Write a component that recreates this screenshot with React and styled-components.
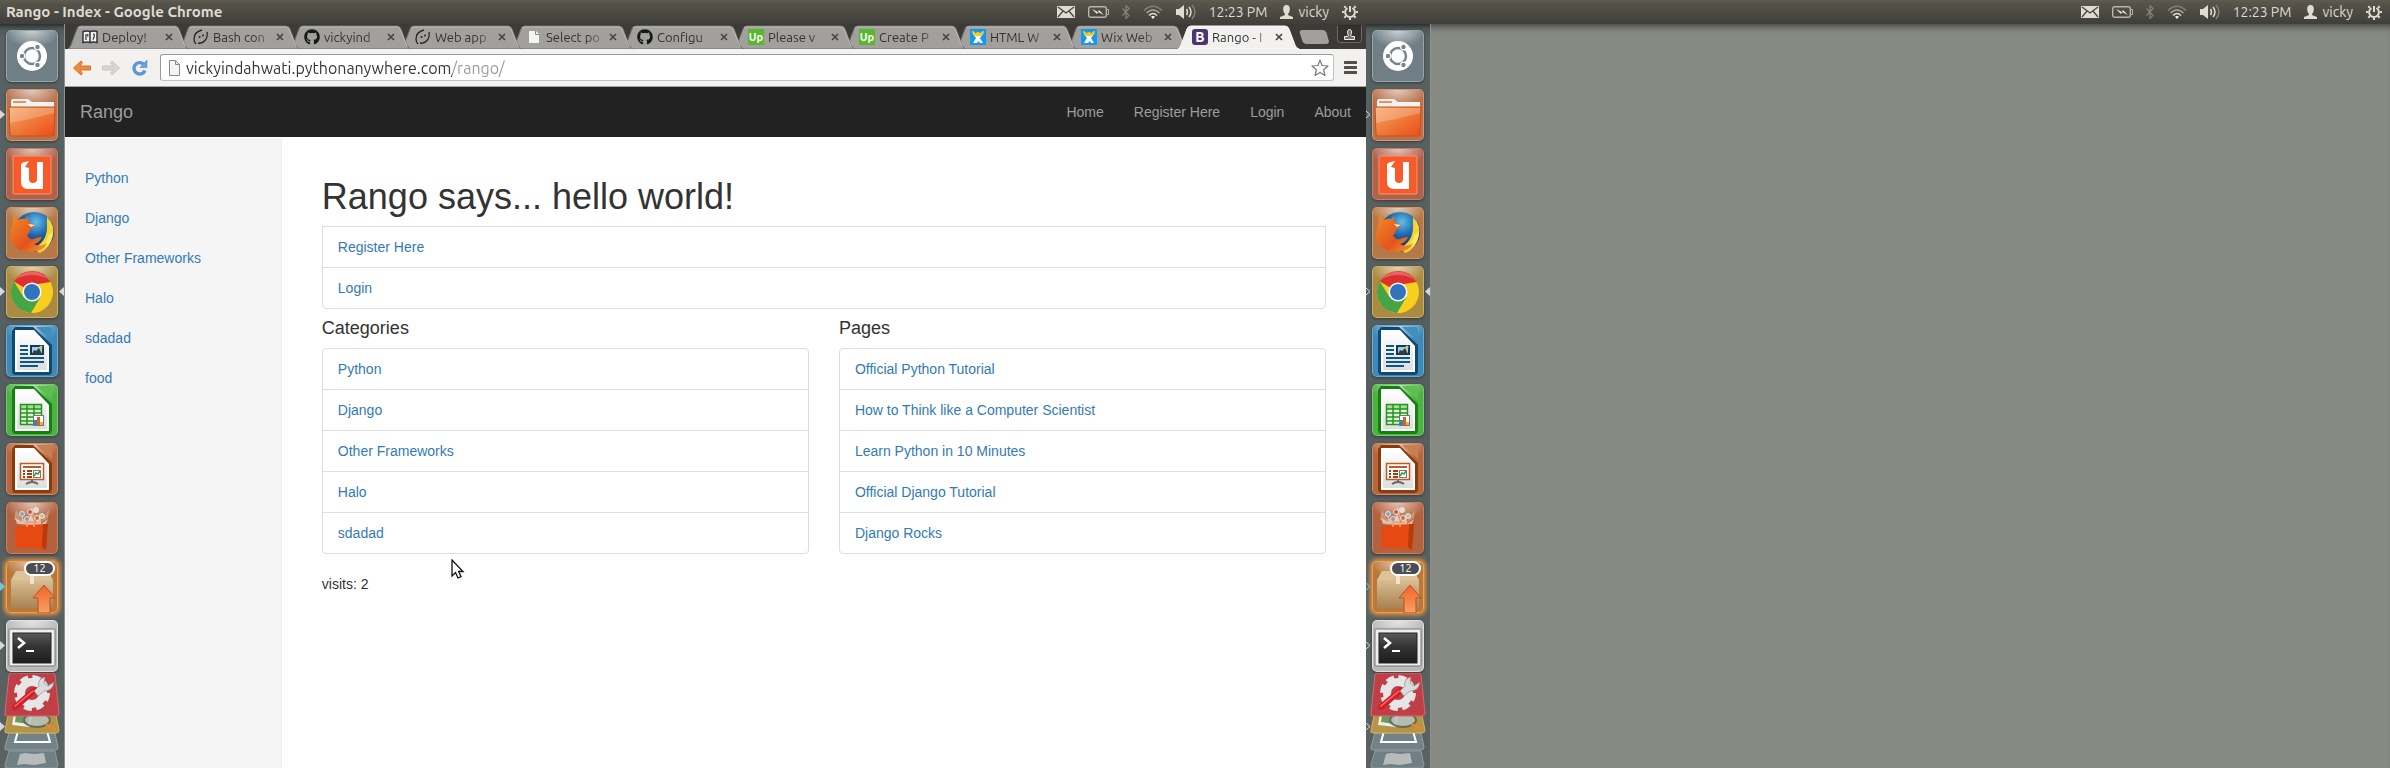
import React from 'react';
import styled, { createGlobalStyle, css } from 'styled-components';
import { FaGithub } from 'react-icons/fa';

const GlobalStyle = createGlobalStyle`
  * { box-sizing: border-box; }
  body { margin: 0; background: #878983; }
  ul, h1, h2, p { margin: 0; padding: 0; list-style: none; font-weight: 400; }
  button { border: 0; padding: 0; background: none; font: inherit; color: inherit; display: block; }
  a { text-decoration: none; }
  svg { display: block; flex: none; }
`;

const uiFont = 'Ubuntu, "Noto Sans", sans-serif';
const pageFont = '"Helvetica Neue", Helvetica, "Liberation Sans", Arial, sans-serif';

/* ---------- desktop shell ---------- */

const Desktop = styled.div`
  display: grid;
  grid-template-columns: 1366fr 1024fr;
  min-height: 100vh;
  font-family: ${uiFont};
`;

const Screen = styled.section`
  display: flex;
  flex-direction: column;
  min-width: 0;
`;

const Workspace = styled.div`
  display: flex;
  flex: 1;
  min-height: 0;
  box-shadow: ${(p) => (p.$shaded ? 'inset 0 7px 6px -4px #4a4b47' : 'none')};
`;

const Panel = styled.header`
  display: flex;
  align-items: center;
  justify-content: space-between;
  height: 24px;
  padding: 0 8px 0 6px;
  background: linear-gradient(#5f5c4e 0, #55534a 4px, #3f3e39 100%);
  color: #dfdbd2;
  font-size: 14px;
`;

const WindowTitle = styled.strong`
  font-size: 15px;
  line-height: 24px;
  white-space: nowrap;
`;

const Indicators = styled.div`
  display: flex;
  align-items: center;
  gap: 13px;
  margin-left: auto;
  line-height: 24px;
  white-space: nowrap;
`;

const UserMenu = styled.button`
  display: flex;
  align-items: center;
  gap: 5px;
`;

/* ---------- launcher ---------- */

const LauncherBar = styled.nav`
  width: 65px;
  flex: none;
  padding: 6px 0 0 6px;
  border-right: 1px solid #8d9290;
  background: linear-gradient(#2c3030 0, #4e5757 5px, #596262 12px, #555f5f 50%, #596261 100%);
`;

const LauncherList = styled.ul`
  display: flex;
  flex-direction: column;
  gap: 7px;
`;

const LauncherItem = styled.li`
  position: relative;
  width: 52px;
`;

const Tile = styled.button`
  width: 52px;
  height: 52px;
  border-radius: 5px;
  overflow: hidden;
  background: radial-gradient(ellipse 28px 18px at 50% 0, rgba(255, 255, 255, 0.65), rgba(255, 255, 255, 0) 100%), ${(p) => p.$color};
  box-shadow: inset 0 0 0 1px ${(p) => p.$edge}, 0 1px 3px rgba(0, 0, 0, 0.4);
  ${(p) => p.$glow && css`
    box-shadow: inset 0 0 0 1px #f0a050, 0 0 4px 2px #e8923c;
  `}
`;

const Badge = styled.span`
  position: absolute;
  top: 0;
  right: 3px;
  width: 31px;
  height: 15px;
  border: 2px solid #fff;
  border-radius: 8px;
  background: #4c4d50;
  color: #fff;
  font-size: 11px;
  line-height: 11px;
  text-align: center;
`;

const Pip = styled.svg`
  position: absolute;
  top: 21px;
  ${(p) => (p.$side === 'right' ? 'right: -6px;' : 'left: -6px;')}
`;

const Stack = styled.div`
  position: relative;
  width: 58px;
  margin: 1px 0 0 -3px;
`;

const StackPip = styled(Pip)`
  top: 49px;
  left: -3px;
`;

function PipShape({ side = 'left', tone = '#d8d8d8', outline, as: Base = Pip }) {
  return (
    <Base $side={side} width="5" height="9" viewBox="0 0 5 9">
      <path
        d={side === 'right' ? 'M5 0 0 4.500 5 9Z' : outline ? 'M0 1 4 4.500 0 8' : 'M0 0 5 4.500 0 9Z'}
        fill={outline && side !== 'right' ? 'none' : tone}
        stroke={outline && side !== 'right' ? tone : 'none'}
      />
    </Base>
  );
}

const Icon52 = ({ children }) => (
  <svg width="52" height="52" viewBox="0 0 52 52" aria-hidden="true">{children}</svg>
);

const DefsHolder = styled.svg`
  position: absolute;
`;

function SharedGradients() {
  return (
    <DefsHolder width="0" height="0" aria-hidden="true">
      <defs>
        <linearGradient id="folder" x1="0" y1="0" x2="1" y2="1">
          <stop offset="0" stopColor="#f6a765" /><stop offset="0.500" stopColor="#ee7a3a" /><stop offset="1" stopColor="#ee4a1a" />
        </linearGradient>
        <linearGradient id="paper" x1="0" y1="0" x2="0" y2="1">
          <stop offset="0" stopColor="#fff" /><stop offset="1" stopColor="#dedede" />
        </linearGradient>
        <radialGradient id="globe" cx="0.550" cy="0.250" r="0.700">
          <stop offset="0" stopColor="#5fc0ea" /><stop offset="0.500" stopColor="#1c62a8" /><stop offset="1" stopColor="#0c2a66" />
        </radialGradient>
        <linearGradient id="fox" x1="0" y1="0" x2="1" y2="1">
          <stop offset="0" stopColor="#f28a28" /><stop offset="0.600" stopColor="#e4541c" /><stop offset="1" stopColor="#f0a02c" />
        </linearGradient>
        <linearGradient id="box" x1="0" y1="0" x2="0" y2="1">
          <stop offset="0" stopColor="#d9bd90" /><stop offset="1" stopColor="#a98354" />
        </linearGradient>
        <linearGradient id="arrow" x1="0" y1="0" x2="0" y2="1">
          <stop offset="0" stopColor="#f0642a" /><stop offset="1" stopColor="#f8a060" />
        </linearGradient>
        <linearGradient id="screen" x1="0" y1="0" x2="0" y2="1">
          <stop offset="0" stopColor="#5a5a5a" /><stop offset="0.450" stopColor="#333" /><stop offset="1" stopColor="#1e1e1e" />
        </linearGradient>
      </defs>
    </DefsHolder>
  );
}

const UbuntuIcon = () => (
  <Icon52>
    <circle cx="26" cy="26" r="15" fill="#fff" />
    <circle cx="26" cy="26" r="8" fill="none" stroke="#77868c" strokeWidth="2.500" />
    {[[16, 26], [31.500, 17], [31.500, 35]].map(([x, y]) => (
      <circle key={`${x}-${y}`} cx={x} cy={y} r="2.800" fill="#77868c" stroke="#fff" strokeWidth="1.200" />
    ))}
  </Icon52>
);

const FilesIcon = () => (
  <Icon52>
    <path d="M5 13q0-3 2-3h15l4 3h22v7H5Z" fill="#f3f3f3" />
    <path d="M7 12h13v2H7Z" fill="#ee9158" />
    <path d="M3 18h46l-1 28q0 1-2 1H6q-2 0-2-2Z" fill="url(#folder)" stroke="#c8501c" />
    <path d="M4 19h44v5Q26 30 4 34Z" fill="#fff" opacity="0.220" />
  </Icon52>
);

const UbuntuOneIcon = () => (
  <Icon52>
    <rect x="7" y="8" width="38" height="38" rx="1" fill="#f85b29" stroke="#fb9272" />
    <path d="M15 16q2-2 4-2l4-1v18q0 4 4 4t4-4V14h6v27H22q-7 0-7-7Z" fill="#fff" />
    <path d="m19 19 4-6v7Z" fill="#f85b29" />
  </Icon52>
);

const FirefoxIcon = () => (
  <Icon52>
    <circle cx="28" cy="25" r="20" fill="url(#globe)" />
    <path d="M41 10q8 8 6 18-2 12-13 18l-8-4q14-6 15-20Z" fill="#f8d22c" />
    <path d="M44 12q2 10-2 17l5-5q0 12-9 18l-6 2q10-10 12-20Z" fill="#fbee6a" opacity="0.800" />
    <path d="M8 8q1 3 4 5 4-2 7-1l3-3q-1 4 1 6l6 3q-1 3-5 4 0 4-3 6 2 5 7 4 4-2 8-2-3 6-8 7 6 4 13-1-3 8-14 9Q11 46 5 34q-2-8 1-15Q6 13 8 8Z" fill="url(#fox)" />
    <path d="m22 17 7 1-4 2Z" fill="#fff3df" />
  </Icon52>
);

const ChromeIcon = () => (
  <Icon52>
    <circle cx="26" cy="26" r="21" fill="#f8cf1c" />
    <path d="M26 26 7.800 15.500A21 21 0 0 1 44.500 16H26Z" fill="#de3030" />
    <path d="M26 26V16h18.500L26 19Z" fill="#de3030" />
    <path d="M7.800 15.500A21 21 0 0 0 25 47l9.500-16H17.500Z" fill="#46a446" />
    <path d="M10 13a21 21 0 0 1 32 0q-16-8-32 0Z" fill="#fff" opacity="0.250" />
    <circle cx="26" cy="26" r="9.500" fill="#fff" />
    <circle cx="26" cy="26" r="8" fill="#2f74bd" />
  </Icon52>
);

const Document = ({ dark, fold, children }) => (
  <Icon52>
    <path d="M9 2h18l19 18v26q0 4-4 4H10q-4 0-4-4V6Z" fill={dark} />
    <path d="M30 2h12q4 0 4 4v10Z" fill={fold} />
    <path d="M9 5h19l15 16v26H9Z" fill="#fff" />
    <path d="M11 7h16l14 15v23H11Z" fill="url(#paper)" />
    {children}
  </Icon52>
);

const WriterIcon = () => (
  <Document dark="#0a4a78" fold="#3f8fc0">
    <path d="M14 21h8M14 25h8M14 29h8M14 33h24M14 37h24M14 41h18" stroke="#0d5688" strokeWidth="2" />
    <rect x="25" y="21" width="12" height="8" fill="#9fd0ea" stroke="#0a3c60" strokeWidth="2" />
    <path d="m26 29 2-4 2 1 3-3 3 6Z" fill="#3a3a34" />
    <circle cx="35" cy="22" r="1.500" fill="#f0c030" />
  </Document>
);

const CalcIcon = () => (
  <Document dark="#10840a" fold="#5cc050">
    <rect x="14" y="21" width="22" height="20" fill="#e2f6dc" />
    <path d="M14 21h22v4H14Z" fill="#a6dc98" />
    <path d="M14.500 20.500h21v20h-21ZM14 25h22M14 29h22M14 33h22M14 37h22M21 21v20M28 21v20" fill="none" stroke="#23941c" strokeWidth="1.500" />
    <rect x="27.500" y="31.500" width="10" height="10" fill="#fff" stroke="#777" />
    <path d="M28 36h3v5h-3Z" fill="#2b84c8" /><path d="M31 33h3v8h-3Z" fill="#ea5a1e" /><path d="M34 38h3v3h-3Z" fill="#e9b81c" />
  </Document>
);

const ImpressIcon = () => (
  <Document dark="#8c3a0a" fold="#c98050">
    <rect x="14.500" y="20.500" width="23" height="16" fill="#fff" stroke="#c05a20" strokeWidth="1.500" />
    <path d="M17 24h18" stroke="#c05a20" strokeWidth="2" />
    <path d="M17 28h2M17 31h2M17 34h2M21 28h5M21 31h5M21 34h5" stroke="#984010" strokeWidth="2" />
    <rect x="27.500" y="27.500" width="7" height="7" fill="#fff" stroke="#777" />
    <path d="m28 33 2-3 2 1 2-3" fill="none" stroke="#38a038" strokeWidth="1.500" />
    <path d="M26 37v2M20 41q6-4 12 0" fill="none" stroke="#666" strokeWidth="2" />
  </Document>
);

const SoftwareIcon = () => (
  <Icon52>
    <path d="m10 8 8 14L8 17ZM26 4l4 16-9-1ZM43 8 33 22l9-6Z" fill="#fff" opacity="0.300" />
    <path d="M11 22 9 16l7 4-1-7 6 8 4-8 4 8 6-8v9l7-5-3 7Z" fill="#fbe8d8" opacity="0.650" />
    {[[16, 12, '#7fa6c0'], [24, 10, '#c05a40'], [30, 8, '#ddd'], [36, 14, '#b9c7a0'], [21, 17, '#8898b0'], [31, 16, '#c87040']].map(([x, y, c]) => (
      <circle key={x} cx={x} cy={y} r="2.500" fill={c} stroke="#f3e2d6" />
    ))}
    <path d="M9 25q17-3 33-3l-2 26q-14-3-30-2Z" fill="#e64a12" />
    <path d="M37 22h5l-2 26-4-3Z" fill="#b93a0c" />
    <path d="M21 25v-5h7v5" fill="none" stroke="#f4a070" strokeWidth="1.500" />
  </Icon52>
);

const UpdaterIcon = () => (
  <Icon52>
    <path d="m5 19 5-9h32l5 9Z" fill="#dcc39a" />
    <path d="M5 19h42v27q0 1-1 1H6q-1 0-1-1Z" fill="url(#box)" />
    <path d="M24 10h4v13h-4Z" fill="#efe3cc" />
    <path d="M38 24 49 37h-5v15H32V37h-5Z" fill="url(#arrow)" stroke="#b8502a" />
  </Icon52>
);

const TerminalIcon = () => (
  <Icon52>
    <rect x="3" y="9" width="46" height="37" rx="1" fill="#eee" stroke="#777" />
    <rect x="7" y="13" width="38" height="30" fill="url(#screen)" stroke="#222" />
    <path d="m12 18 6 5-6 5" fill="none" stroke="#fff" strokeWidth="2.500" />
    <path d="M20 31h8" stroke="#fff" strokeWidth="2" />
  </Icon52>
);

const CollapsedIcons = () => (
  <svg width="58" height="95" viewBox="0 0 58 95" aria-hidden="true">
    <path d="M6 78h46l3 14q0 3-3 3H4q-3 0-2-3Z" fill="#6f7f84" stroke="#8c9a9d" />
    <path d="m17 81 5-1 9 1 10-1 2 10-12 2-10-1-7 1Z" fill="#c9cbc9" opacity="0.800" />
    <path d="M6 60h46l3 14q0 3-3 3H4q-3 0-2-3Z" fill="#718289" stroke="#93a0a4" />
    <path d="m15 58-3 11h35l-3-11" fill="none" stroke="#fff" strokeWidth="2" />
    <path d="M6 38h46l4 19q0 3-3 3H4q-3 0-2-3Z" fill="#b59444" stroke="#d2b264" />
    <path d="m11 40 18 1-2 13-18-2Z" fill="#eee" />
    <path d="m13 42 14 1-2 8-13-2Z" fill="#6d9b58" />
    <ellipse cx="34" cy="47" rx="13" ry="7" fill="#b8c4c4" opacity="0.850" stroke="#5b625f" strokeWidth="2" />
    <path d="m44 52 8 4" stroke="#e8862c" strokeWidth="3" strokeLinecap="round" />
    <path d="M6 2q0-2 3-2h40q3 0 3 2l4 38q0 3-3 3H4q-3 0-2-3Z" fill="#c03e46" stroke="#d66a70" />
    <circle cx="29" cy="20" r="16" fill="none" stroke="#e6e6e6" strokeWidth="4" strokeDasharray="8 4.566" />
    <circle cx="29" cy="20" r="11" fill="none" stroke="#e6e6e6" strokeWidth="8" />
    <path d="M12 34 32 17" stroke="#d31f26" strokeWidth="6" strokeLinecap="round" />
    <path d="m12 33 18-15" stroke="#f07074" strokeWidth="1.500" strokeLinecap="round" />
    <path d="m31 18 5-5q-2-7 6-9l-1 6 4 3 6-4q-1 9-10 9l-6 5Z" fill="#d9dcdc" stroke="#8c8f8f" strokeWidth="0.700" />
  </svg>
);

const launcherApps = [
  { name: 'Dash home', color: '#6f7f85', edge: '#98a5a8', Art: UbuntuIcon },
  { name: 'Files', color: '#b87450', edge: '#d8956c', Art: FilesIcon, open: true },
  { name: 'Ubuntu One', color: '#b0634c', edge: '#cc7c62', Art: UbuntuOneIcon },
  { name: 'Firefox', color: '#b57949', edge: '#d6945f', Art: FirefoxIcon },
  { name: 'Google Chrome', color: '#ab8b42', edge: '#cdae62', Art: ChromeIcon, open: true, active: true },
  { name: 'LibreOffice Writer', color: '#4188b4', edge: '#69acd2', Art: WriterIcon },
  { name: 'LibreOffice Calc', color: '#4fb045', edge: '#72cf66', Art: CalcIcon },
  { name: 'LibreOffice Impress', color: '#b5683f', edge: '#d08964', Art: ImpressIcon },
  { name: 'Software Centre', color: '#b2623f', edge: '#cb8061', Art: SoftwareIcon },
  { name: 'Software Updater', color: '#b9783c', edge: '#f0a050', Art: UpdaterIcon, open: true, badge: '12' },
  { name: 'Terminal', color: '#b9b9b9', edge: '#e0e0e0', Art: TerminalIcon, open: true },
];

function Launcher({ outline }) {
  return (
    <LauncherBar aria-label="Launcher">
      <LauncherList>
        {launcherApps.map(({ name, color, edge, Art, open, active, badge }) => (
          <LauncherItem key={name}>
            <Tile aria-label={name} $color={color} $edge={edge} $glow={Boolean(badge)}><Art /></Tile>
            {badge && <Badge>{badge}</Badge>}
            {open && <PipShape outline={outline} tone={badge ? '#6cc4ec' : '#d8d8d8'} />}
            {active && <PipShape side="right" />}
          </LauncherItem>
        ))}
      </LauncherList>
      <Stack>
        <CollapsedIcons />
        <PipShape as={StackPip} outline={outline} />
      </Stack>
    </LauncherBar>
  );
}

/* ---------- indicator icons ---------- */

const MailIcon = () => (
  <svg width="18" height="12" viewBox="0 0 18 12">
    <rect width="18" height="12" fill="#dfdbd2" />
    <path d="m1 1 8 6 8-6M1 11l5-6M17 11l-5-6" fill="none" stroke="#47453f" strokeWidth="1.300" />
  </svg>
);
const BatteryIcon = () => (
  <svg width="21" height="12" viewBox="0 0 21 12">
    <rect x="0.700" y="0.700" width="17.600" height="10.600" rx="2" fill="none" stroke="#b9b5ab" strokeWidth="1.400" />
    <path d="M19 3.500h1.500v5H19" fill="none" stroke="#b9b5ab" />
    <path d="m4 3 6 3 1-2 5 5-6-3-1 2Z" fill="#efece4" />
  </svg>
);
const BluetoothIcon = () => (
  <svg width="8" height="14" viewBox="0 0 8 14">
    <path d="m.5 3.500 6.500 7L4 13.300V.7l3 2.800-6.500 7" fill="none" stroke="#85827a" strokeWidth="1.200" />
  </svg>
);
const WifiIcon = () => (
  <svg width="20" height="14" viewBox="0 0 20 14">
    <g fill="none" strokeWidth="1.600">
      <path d="M1 5.500Q10-3 19 5.500" stroke="#85827a" />
      <path d="M3.500 8Q10 2 16.500 8" stroke="#aaa69d" />
      <path d="M6 10.500Q10 6.500 14 10.500" stroke="#dfdbd2" />
    </g>
    <path d="m10 14-2-2.500q2-1 4 0Z" fill="#fff" />
  </svg>
);
const SoundIcon = () => (
  <svg width="20" height="16" viewBox="0 0 20 16">
    <path d="M0 5h3l5-4v14l-5-4H0Z" fill="#dfdbd2" />
    <g fill="none" strokeWidth="1.500">
      <path d="M10.500 5q2 3 0 6M13 3q4 5 0 10" stroke="#dfdbd2" />
      <path d="M16 1q6 7 0 14" stroke="#827f77" />
    </g>
  </svg>
);
const PersonIcon = () => (
  <svg width="13" height="14" viewBox="0 0 13 14">
    <path d="M6.500 0C4 0 3 2 3.200 4.500c.1 2 .8 3.500 1.800 4.500v1L0 12v2h13v-2l-5-2V9c1-1 1.700-2.500 1.800-4.500C10 2 9 0 6.500 0Z" fill="#dfdbd2" />
  </svg>
);
const SessionIcon = () => (
  <svg width="16" height="16" viewBox="0 0 16 16">
    <path d="M5.500 4A4.900 4.900 0 1 0 10.500 4" fill="none" stroke="#dfdbd2" strokeWidth="2" />
    <path d="M8 2v6" stroke="#dfdbd2" strokeWidth="2" />
    <path d="M0 8h2M14 8h2M8 14v2M2.300 2.300l1.600 1.600M12 4l1.700-1.700M2.300 13.700l1.600-1.600M12 12l1.700 1.700" stroke="#dfdbd2" strokeWidth="2" />
  </svg>
);

function SystemIndicators() {
  return (
    <Indicators>
      <MailIcon />
      <BatteryIcon />
      <BluetoothIcon />
      <WifiIcon />
      <SoundIcon />
      <time>12:23 PM</time>
      <UserMenu><PersonIcon />vicky</UserMenu>
      <SessionIcon />
    </Indicators>
  );
}

/* ---------- browser chrome ---------- */

const Browser = styled.main`
  display: flex;
  flex-direction: column;
  flex: 1;
  min-width: 0;
  background: #fff;
`;

const TabStrip = styled.div`
  display: flex;
  height: 25px;
  padding: 1px 4px 0 3px;
  background: #3c3b37;
`;

const TabBox = styled.div`
  position: relative;
  z-index: ${(p) => p.$z};
  display: flex;
  align-items: center;
  flex: none;
  width: 122px;
  height: 24px;
  margin-right: -11px;
  padding: 0 17px 0 14px;
  color: ${(p) => (p.$active ? '#333' : '#35332f')};
  font-size: 13px;
`;

const TabShape = styled.svg`
  position: absolute;
  inset: 0;
  z-index: -1;
`;

const TabTitle = styled.button`
  flex: 1;
  min-width: 0;
  margin: 0 5px 0 4px;
  overflow: hidden;
  line-height: 22px;
  text-align: left;
  white-space: nowrap;
  mask-image: linear-gradient(90deg, #000 70%, rgba(0, 0, 0, 0.2) 100%);
`;

const TabClose = styled.button`
  width: 8px;
  height: 8px;
`;

const Favicon = styled.span`
  width: 16px;
  height: 16px;
  flex: none;
  border-radius: ${(p) => (p.$round ? '3px' : 0)};
  background: ${(p) => p.$bg || 'transparent'};
  color: #fff;
  font-size: ${(p) => (p.$round ? '14px' : '11px')};
  font-weight: 700;
  line-height: 16px;
  text-align: center;
`;

const NewTab = styled.button`
  width: 30px;
  height: 14px;
  margin: 5px 0 0 10px;
`;

const ProfileButton = styled.button`
  display: grid;
  place-items: center;
  width: 25px;
  height: 18px;
  margin: 0 0 0 auto;
  border: 1px solid #6a6863;
  border-top-color: #2c2b28;
  border-radius: 0 0 4px 4px;
  background: #33322f;
`;

const Toolbar = styled.div`
  display: flex;
  align-items: center;
  height: 38px;
  padding: 0 9px 0 8px;
  border-bottom: 1px solid #a5a4a2;
  background: #f2f1f0;
`;

const NavButtons = styled.div`
  display: flex;
  gap: 11px;
  margin-right: 11px;
`;

const AddressBar = styled.label`
  display: flex;
  flex: 1;
  align-items: center;
  gap: 5px;
  height: 27px;
  margin-right: 10px;
  padding: 0 4px 0 7px;
  border: 1px solid #c4c2bf;
  border-top-color: #9c9a98;
  border-left-color: #9c9a98;
  border-radius: 3px;
  background: #fff;
`;

const AddressInput = styled.input`
  flex: 1;
  min-width: 0;
  height: 24px;
  padding: 0;
  border: 0;
  outline: 0;
  background: linear-gradient(90deg, #333 266px, #999 266px);
  background-clip: text;
  color: transparent;
  font: 16px/24px ${uiFont};
`;

const BookIcon = () => (
  <svg width="16" height="16" viewBox="0 0 16 16">
    <path d="M1 2.500q4-1 7 0 3-1 7 0v11q-4-1-7 0-3-1-7 0Z" fill="#f0f0f0" stroke="#333" strokeWidth="1.500" />
    <path d="M8 3v10" stroke="#333" strokeWidth="1.500" />
    <path d="M4 5v6M5.800 5v2.500M11 5q2 0 1 3t-1 2.500" fill="none" stroke="#222" strokeWidth="1.100" />
  </svg>
);
const SnakeIcon = () => (
  <svg width="16" height="16" viewBox="0 0 16 16" fill="none" stroke="#252525" strokeWidth="1.300">
    <path d="M9 1Q1 3 1 10q0 3 2 5" />
    <path d="M14 3q1 5-2 8.500-3 3.500-7 2.500" />
    <circle cx="6.500" cy="8" r="0.400" /><circle cx="10" cy="6.500" r="0.400" />
  </svg>
);
const PageIcon = ({ outlined }) => (
  <svg width={outlined ? 13 : 16} height="16" viewBox={outlined ? '0 0 13 16' : '0 0 16 16'}>
    <path
      d={outlined ? 'M1.500 .5h6l4 4v11h-10Z' : 'M3 2h7l3 3v9H3Z'}
      fill="#f4f4f4"
      stroke={outlined ? '#888' : 'none'}
    />
    <path d={outlined ? 'M7.500 .5v4h4' : 'M9.500 2v3.500H13'} fill="none" stroke="#888" />
  </svg>
);
const WixIcon = () => (
  <svg width="16" height="16" viewBox="0 0 16 16">
    <rect width="16" height="16" fill="#1498f4" />
    <path d="m3 5 3 4-3 5h4l1.500-2L10 14h3l-3-5 3-4Z" fill="#fff" />
    <path d="M2 2q3 0 3.500 2.500Q6 3 8 3t2.500 1.500Q11 2 14 2q0 4-4 5H6Q2 6 2 2Z" fill="#f6cc18" />
  </svg>
);

const favicons = {
  book: <BookIcon />,
  snake: <SnakeIcon />,
  github: <FaGithub size={16} color="#181818" />,
  page: <PageIcon />,
  up: <Favicon $bg="#57b82d">Up</Favicon>,
  wix: <WixIcon />,
  bootstrap: <Favicon $bg="#4f3472" $round>B</Favicon>,
};

const tabs = [
  ['book', 'Deploy!'],
  ['snake', 'Bash con'],
  ['github', 'vickyind'],
  ['snake', 'Web app'],
  ['page', 'Select po'],
  ['github', 'Configu'],
  ['up', 'Please v'],
  ['up', 'Create P'],
  ['wix', 'HTML W'],
  ['wix', 'Wix Web'],
  ['bootstrap', 'Rango - I'],
];

function Tab({ icon, title, active, z }) {
  return (
    <TabBox $z={z} $active={active}>
      <TabShape width="122" height="24" viewBox="0 0 122 24" aria-hidden="true">
        <path
          d="M0 24Q2 23 3 20L9 4q1-3 4-3h94q3 0 4 3l6 16q1 3 4 4Z"
          fill={active ? '#f2f1f0' : '#a1a09d'}
          stroke={active ? '#f8f8f8' : '#74736f'}
        />
        {!active && <path d="M10 3q1-1 3-1h94q2 0 3 2l7 17" fill="none" stroke="#bdbcb9" />}
      </TabShape>
      {favicons[icon]}
      <TabTitle>{title}</TabTitle>
      <TabClose aria-label={`Close ${title}`}>
        <svg width="8" height="8" viewBox="0 0 8 8"><path d="m1 1 6 6M7 1 1 7" stroke="#454440" strokeWidth="1.600" /></svg>
      </TabClose>
    </TabBox>
  );
}

function BrowserChrome() {
  return (
    <>
      <TabStrip>
        {tabs.map(([icon, title], i) => (
          <Tab key={title} icon={icon} title={title} active={i === tabs.length - 1} z={i === tabs.length - 1 ? 30 : 20 - i} />
        ))}
        <NewTab aria-label="New tab">
          <svg width="30" height="14" viewBox="0 0 30 14">
            <path d="M1 2q0-1.500 2-1.500h21q2 0 3 2l2.500 9q0 2-2 2H7q-2 0-3-2Z" fill="#a1a09d" stroke="#c0bfbc" strokeWidth="0.600" />
          </svg>
        </NewTab>
        <ProfileButton aria-label="Profile">
          <svg width="11" height="11" viewBox="0 0 11 11">
            <path d="M.5 10.500v-3h2.500l1.500-1Q3.500 5 3.500 3q0-2.500 2-2.500t2 2.500q0 2-1 3.500l1.500 1h2.500v3Z" fill="#77756f" stroke="#eee" />
          </svg>
        </ProfileButton>
      </TabStrip>
      <Toolbar>
        <NavButtons>
          <button aria-label="Back">
            <svg width="18" height="16" viewBox="0 0 18 16">
              <path d="M.5 8 8 1l1.500 1.500L7 6h10.500v4H7l2.500 3.500L8 15Z" fill="#f08a42" stroke="#d9702c" strokeLinejoin="round" />
            </svg>
          </button>
          <button aria-label="Forward">
            <svg width="18" height="16" viewBox="0 0 18 16">
              <path d="M17.500 8 10 15 8.500 13.500 11 10H.5V6H11L8.500 2.500 10 1Z" fill="#d7d5d2" stroke="#c9c7c4" strokeLinejoin="round" />
            </svg>
          </button>
          <button aria-label="Reload">
            <svg width="18" height="16" viewBox="0 0 18 16">
              <path d="M12.500 4A5.700 5.700 0 1 0 14 10.500" fill="none" stroke="#5c97d2" strokeWidth="3.400" />
              <path d="M16 0v7.500H9Z" fill="#6ba5dc" stroke="#4f8ac8" strokeWidth="0.600" />
            </svg>
          </button>
        </NavButtons>
        <AddressBar>
          <PageIcon outlined />
          <AddressInput aria-label="Address" defaultValue="vickyindahwati.pythonanywhere.com/rango/" />
          <svg width="18" height="18" viewBox="0 0 18 18">
            <path d="m9 1.200 2.200 5.300 5.800.5-4.400 3.800 1.400 5.700L9 13.400 4 16.500l1.400-5.700L1 7l5.800-.5Z" fill="#fff" stroke="#777" strokeWidth="1.200" strokeLinejoin="round" />
          </svg>
        </AddressBar>
        <button aria-label="Menu">
          <svg width="13" height="13" viewBox="0 0 13 13">
            <path d="M1 1.500h11M1 6.500h11M1 11.500h11" stroke="#51504d" strokeWidth="3" strokeLinecap="round" />
          </svg>
        </button>
      </Toolbar>
    </>
  );
}

/* ---------- Rango site ---------- */

const Site = styled.div`
  position: relative;
  display: flex;
  flex: 1;
  flex-direction: column;
  font: 14px/20px ${pageFont};
  color: #333;
`;

const Navbar = styled.nav`
  display: flex;
  align-items: center;
  justify-content: space-between;
  height: 51px;
  padding: 0 15px;
  border-bottom: 1px solid #fff;
  background: #222;
`;

const Brand = styled.a`
  color: #9d9d9d;
  font-size: 18px;
`;

const NavLinks = styled.div`
  display: flex;
  gap: 30px;
`;

const NavLink = styled.a`
  color: #9d9d9d;
`;

const Columns = styled.div`
  display: grid;
  grid-template-columns: 1fr 5fr;
  flex: 1;
`;

const Sidebar = styled.ul`
  padding: 20px 0;
  border-right: 1px solid #eee;
  background: #f5f5f5;
`;

const SideLink = styled.a`
  display: block;
  padding: 10px 20px;
  color: #337ab7;
`;

const Content = styled.article`
  padding: 39px 40px 20px;
`;

const Heading = styled.h1`
  margin-bottom: 10px;
  font-size: 36px;
  line-height: 39px;
`;

const SubHeading = styled.h2`
  margin: 10px 0;
  font-size: 18px;
  line-height: 19px;
`;

const LinkList = styled.ul`
  border: 1px solid #ddd;
  border-radius: ${(p) => (p.$squareTop ? '0 0 4px 4px' : '4px')};
`;

const LinkRow = styled.li`
  padding: 10px 15px;
  & + & { border-top: 1px solid #ddd; }
`;

const TextLink = styled.a`
  color: #337ab7;
`;

const Halves = styled.div`
  display: grid;
  grid-template-columns: 1fr 1fr;
  gap: 30px;
`;

const Visits = styled.p`
  margin-top: 20px;
`;

const Pointer = styled.svg`
  position: absolute;
  left: 386px;
  top: 472px;
`;

const categories = ['Python', 'Django', 'Other Frameworks', 'Halo', 'sdadad'];
const pages = ['Official Python Tutorial', 'How to Think like a Computer Scientist', 'Learn Python in 10 Minutes', 'Official Django Tutorial', 'Django Rocks'];

const Links = ({ items, squareTop }) => (
  <LinkList $squareTop={squareTop}>
    {items.map((text) => <LinkRow key={text}><TextLink href="#">{text}</TextLink></LinkRow>)}
  </LinkList>
);

function RangoSite() {
  return (
    <Site>
      <Navbar>
        <Brand href="#">Rango</Brand>
        <NavLinks>
          {['Home', 'Register Here', 'Login', 'About'].map((text) => <NavLink key={text} href="#">{text}</NavLink>)}
        </NavLinks>
      </Navbar>
      <Columns>
        <Sidebar>
          {[...categories, 'food'].map((text) => <li key={text}><SideLink href="#">{text}</SideLink></li>)}
        </Sidebar>
        <Content>
          <Heading>Rango says... hello world!</Heading>
          <Links items={['Register Here', 'Login']} squareTop />
          <Halves>
            <section>
              <SubHeading>Categories</SubHeading>
              <Links items={categories} />
            </section>
            <section>
              <SubHeading>Pages</SubHeading>
              <Links items={pages} />
            </section>
          </Halves>
          <Visits>visits: 2</Visits>
        </Content>
      </Columns>
      <Pointer width="14" height="22" viewBox="0 0 14 22" aria-hidden="true">
        <path d="M1 1v16l3.500-3.500L7 19l3-1.300-2.300-5.200H12Z" fill="#fff" stroke="#111" strokeWidth="1.300" />
      </Pointer>
    </Site>
  );
}

export default function App() {
  return (
    <>
      <GlobalStyle />
      <SharedGradients />
      <Desktop>
        <Screen>
          <Panel>
            <WindowTitle>Rango - Index - Google Chrome</WindowTitle>
            <SystemIndicators />
          </Panel>
          <Workspace>
            <Launcher />
            <Browser>
              <BrowserChrome />
              <RangoSite />
            </Browser>
          </Workspace>
        </Screen>
        <Screen>
          <Panel><SystemIndicators /></Panel>
          <Workspace $shaded><Launcher outline /></Workspace>
        </Screen>
      </Desktop>
    </>
  );
}
